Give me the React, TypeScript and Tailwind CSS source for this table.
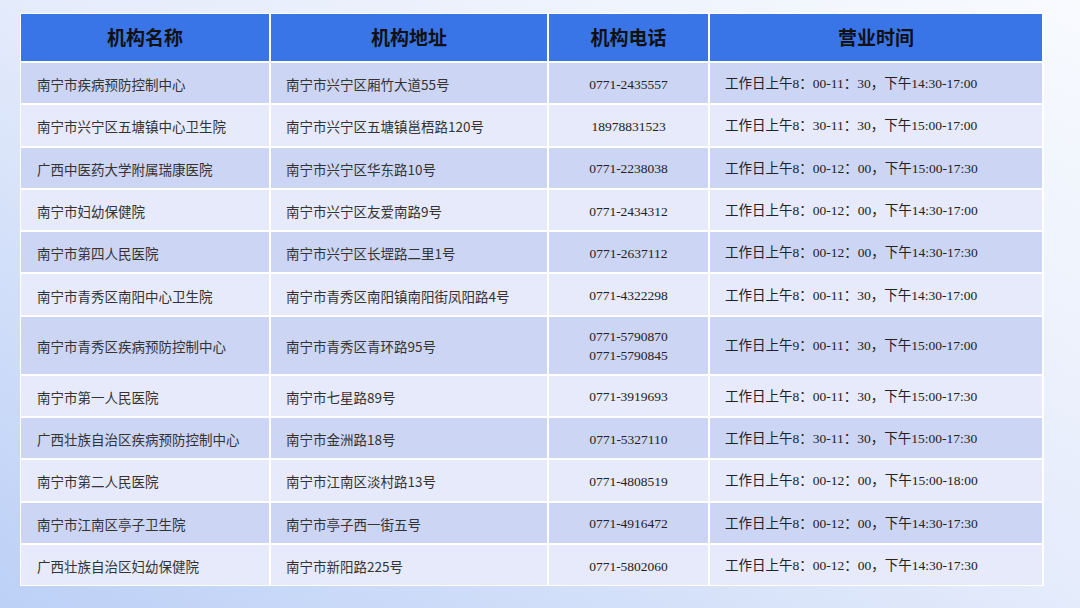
import React from "react";

type Row = {
    name: string;
    address: string;
    phones: string[];
    hours: string;
    tall?: boolean;
};

const ROWS: Row[] = [
    { name: "南宁市疾病预防控制中心", address: "南宁市兴宁区厢竹大道55号", phones: ["0771-2435557"], hours: "工作日上午8：00-11：30，下午14:30-17:00" },
    { name: "南宁市兴宁区五塘镇中心卫生院", address: "南宁市兴宁区五塘镇邕梧路120号", phones: ["18978831523"], hours: "工作日上午8：30-11：30，下午15:00-17:00" },
    { name: "广西中医药大学附属瑞康医院", address: "南宁市兴宁区华东路10号", phones: ["0771-2238038"], hours: "工作日上午8：00-12：00，下午15:00-17:30" },
    { name: "南宁市妇幼保健院", address: "南宁市兴宁区友爱南路9号", phones: ["0771-2434312"], hours: "工作日上午8：00-12：00，下午14:30-17:00" },
    { name: "南宁市第四人民医院", address: "南宁市兴宁区长堽路二里1号", phones: ["0771-2637112"], hours: "工作日上午8：00-12：00，下午14:30-17:30" },
    { name: "南宁市青秀区南阳中心卫生院", address: "南宁市青秀区南阳镇南阳街凤阳路4号", phones: ["0771-4322298"], hours: "工作日上午8：00-11：30，下午14:30-17:00" },
    { name: "南宁市青秀区疾病预防控制中心", address: "南宁市青秀区青环路95号", phones: ["0771-5790870", "0771-5790845"], hours: "工作日上午9：00-11：30，下午15:00-17:00", tall: true },
    { name: "南宁市第一人民医院", address: "南宁市七星路89号", phones: ["0771-3919693"], hours: "工作日上午8：00-11：30，下午15:00-17:30" },
    { name: "广西壮族自治区疾病预防控制中心", address: "南宁市金洲路18号", phones: ["0771-5327110"], hours: "工作日上午8：30-11：30，下午15:00-17:30" },
    { name: "南宁市第二人民医院", address: "南宁市江南区淡村路13号", phones: ["0771-4808519"], hours: "工作日上午8：00-12：00，下午15:00-18:00" },
    { name: "南宁市江南区亭子卫生院", address: "南宁市亭子西一街五号", phones: ["0771-4916472"], hours: "工作日上午8：00-12：00，下午14:30-17:30" },
    { name: "广西壮族自治区妇幼保健院", address: "南宁市新阳路225号", phones: ["0771-5802060"], hours: "工作日上午8：00-12：00，下午14:30-17:30" },
];

const HEADERS = ["机构名称", "机构地址", "机构电话", "营业时间"];

const sans = "font-['Noto_Sans_CJK_SC',sans-serif]";
const serif = "font-['Liberation_Serif','Noto_Sans_CJK_SC',serif]";

export default function App() {
    return (
        <div className="w-[1080px] h-[608px] overflow-hidden bg-linear-to-tr from-[#bcd0f6] via-[#e4ebfb] to-[#f8fafe] pt-[13px] pl-[20px]">
            <div className="w-[1024px] bg-white p-px grid grid-cols-[248px_276px_159px_332px] gap-[2px]">
                {/* header */}
                {HEADERS.map((h) => (
                    <div
                        key={h}
                        className={`h-[47px] bg-[#3a75e7] flex items-center justify-center text-[19px] font-bold text-[#111] ${sans}`}
                    >
                        {h}
                    </div>
                ))}

                {ROWS.map((row, i) => {
                    const bg = i % 2 === 0 ? "bg-[#cdd5f5]" : "bg-[#e7eafa]";
                    const h = row.tall ? "h-[57px]" : "h-[40.3px]";
                    return (
                        <React.Fragment key={row.name}>
                            <div className={`${bg} ${h} flex items-center pl-[16px] pt-[2px] text-[13.5px] text-[#333] ${sans}`}>
                                {row.name}
                            </div>
                            <div className={`${bg} ${h} flex items-center pl-[15px] pt-[2px] text-[13.5px] text-[#333] ${sans}`}>
                                {row.address}
                            </div>
                            <div className={`${bg} ${h} flex flex-col items-center justify-center pt-[2px] text-[13.5px] leading-[19px] text-[#222] ${serif}`}>
                                {row.phones.map((p) => (
                                    <span key={p}>{p}</span>
                                ))}
                            </div>
                            <div className={`${bg} ${h} flex items-center pl-[15px] pt-[2px] text-[13.5px] text-[#222] ${serif}`}>
                                {row.hours}
                            </div>
                        </React.Fragment>
                    );
                })}
            </div>
        </div>
    );
}
